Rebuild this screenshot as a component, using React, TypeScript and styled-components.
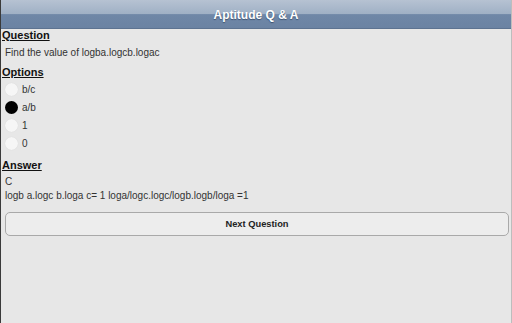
import React, { useState } from "react";
import styled, { createGlobalStyle } from "styled-components";

const Global = createGlobalStyle`
  html, body { margin: 0; padding: 0; height: 100%; }
  body {
    background: #e7e7e7;
    font-family: "Liberation Sans", Arial, sans-serif;
    overflow: hidden;
  }
  #root { height: 100%; }
`;

const Page = styled.div`
  height: 323px;
  box-sizing: border-box;
  border-left: 1px solid #3a3a3a;
  border-right: 1px solid #bdbdbd;
  background: #e7e7e7;
  display: flex;
  flex-direction: column;
`;

const Header = styled.header`
  height: 28px;
  border-bottom: 1px solid #5d7391;
  background: linear-gradient(
    to bottom,
    #b6c2d2 0%,
    #9fb0c5 50%,
    #6f87a7 52%,
    #6b83a3 100%
  );
  display: flex;
  align-items: center;
  justify-content: center;
`;

const Title = styled.h1`
  margin: 0;
  font-size: 12px;
  font-weight: bold;
  color: #fff;
  text-shadow: 0 1px 1px #3e5270;
  padding-top: 2px;
`;

const Content = styled.main`
  display: flex;
  flex-direction: column;
  padding: 0 3px 0 1px;
`;

const Heading = styled.h2<{ $mt: number }>`
  margin: ${(p) => p.$mt}px 0 0 0;
  font-size: 11px;
  line-height: 13px;
  font-weight: bold;
  color: #111;
  text-decoration: underline;
`;

const Text = styled.p<{ $mt: number }>`
  margin: ${(p) => p.$mt}px 0 0 3px;
  font-size: 10px;
  line-height: 13px;
  color: #333;
`;

const OptionList = styled.div`
  margin-top: 1px;
  display: flex;
  flex-direction: column;
`;

const OptionRow = styled.label`
  height: 18px;
  display: flex;
  align-items: center;
  gap: 4px;
  padding-left: 3px;
  cursor: pointer;
`;

const Dot = styled.span<{ $on: boolean }>`
  width: 13px;
  height: 13px;
  border-radius: 50%;
  box-sizing: border-box;
  background: ${(p) => (p.$on ? "#000" : "#f6f6f6")};
  box-shadow: ${(p) => (p.$on ? "none" : "0 0 1px rgba(0,0,0,0.12)")};
`;

const OptionText = styled.span`
  font-size: 10px;
  color: #333;
`;

const NextButton = styled.button`
  margin: 10px 0 0 3px;
  height: 24px;
  width: 504px;
  box-sizing: border-box;
  border: 1px solid #a9a9a9;
  border-radius: 5px;
  background: #ededed;
  font-family: "Liberation Sans", Arial, sans-serif;
  font-size: 9.3px;
  font-weight: bold;
  color: #222;
  cursor: pointer;
`;

const options = ["b/c", "a/b", "1", "0"];

export default function App() {
  const [sel, setSel] = useState(1);
  return (
    <>
      <Global />
      <Page>
        <Header>
          <Title>Aptitude Q &amp; A</Title>
        </Header>
        <Content>
          <Heading $mt={0}>Question</Heading>
          <Text $mt={4}>Find the value of logba.logcb.logac</Text>
          <Heading $mt={7}>Options</Heading>
          <OptionList>
            {options.map((o, i) => (
              <OptionRow key={o} onClick={() => setSel(i)}>
                <Dot $on={sel === i} />
                <OptionText>{o}</OptionText>
              </OptionRow>
            ))}
          </OptionList>
          <Heading $mt={7}>Answer</Heading>
          <Text $mt={3}>C</Text>
          <Text $mt={1}>logb a.logc b.loga c= 1 loga/logc.logc/logb.logb/loga =1</Text>
          <NextButton>Next Question</NextButton>
        </Content>
      </Page>
    </>
  );
}
